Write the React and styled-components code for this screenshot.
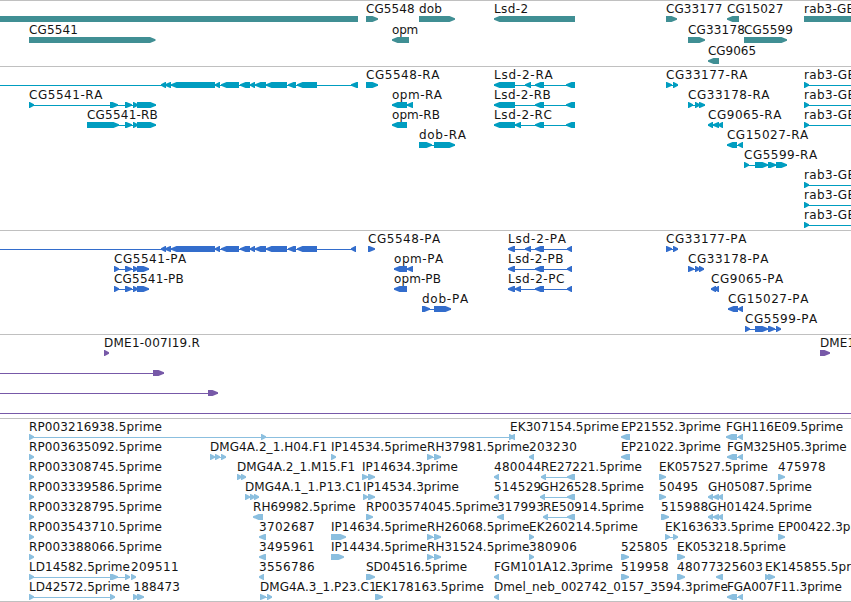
import React from "react";
import styled, { createGlobalStyle } from "styled-components";

const VIEW_WIDTH = 851;
const GLYPH_HEIGHT = 6;
const LABEL_FONT = '12px "DejaVu Sans"';

const GlobalStyle = createGlobalStyle`
  html, body { margin: 0; background: #fff; overflow: hidden; }
`;

const Browser = styled.main`
  display: flex;
  flex-direction: column;
  width: ${VIEW_WIDTH}px;
  height: 602px;
  overflow: hidden;
  background: #fff;
  color: #000;
`;

const TrackPanel = styled.section`
  box-sizing: border-box;
  flex: none;
  height: ${(p) => p.$height}px;
  padding-top: 1px;
  border-top: 1px solid #c0c0c0;
  color: ${(p) => p.$color};
`;

const Row = styled.div`
  display: flex;
  flex-direction: column;
  height: ${(p) => p.$pitch}px;
`;

const LabelLane = styled.div`
  position: relative;
  height: 14px;
`;

const Label = styled.span`
  position: absolute;
  top: 0;
  color: #141414;
  font: ${LABEL_FONT}, sans-serif;
  line-height: 14px;
  white-space: pre;
  font-kerning: none;
`;

const GlyphLane = styled.svg`
  display: block;
  flex: none;
  width: ${VIEW_WIDTH}px;
  height: ${GLYPH_HEIGHT}px;
  fill: currentColor;
`;

const BottomRule = styled.div`
  height: 1px;
  flex: none;
  background: #c0c0c0;
`;

/* strand: 1 forward, -1 reverse, 0 runs past the visible window */
const f = (label, x, end, strand, exons, line) => ({ label, x, end, strand, exons, line });

const geneBody = [
  [161, 166], [165, 171], [171, 215], [215, 220], [221, 239], [240, 250],
  [250, 255], [255, 266], [266, 287], [288, 296], [297, 317],
];
const rab3 = () => f("rab3-GEF-R", 804, 876, 1, [[804, 809]], [804, 851]);
const rp = (id) => f(`RP00${id}.5prime`, 29, 161.5, 1, [[29, 34]]);

const tracks = [
  {
    name: "genes", color: "#408f94", height: 66, pitch: 21,
    rows: [
      [
        f("", 0, 0, 0, [[0, 358]]),
        f("CG5548", 366, 414.3, 1, [[366, 378]]),
        f("dob", 419, 441.5, 1, [[419, 455]]),
        f("Lsd-2", 494, 528, -1, [[494, 575]]),
        f("CG33177", 666, 722, 1, [[666, 677]]),
        f("CG15027", 727, 783, -1, [[727, 739]]),
        f("rab3-GEF", 804, 861.5, 0, [[804, 851]]),
      ],
      [
        f("CG5541", 29, 77.6, 1, [[29, 155.5]]),
        f("opm", 392, 417.5, -1, [[392, 409]]),
        f("CG33178", 688, 744.5, 1, [[688, 705]]),
        f("CG5599", 744, 792.5, 1, [[744, 787]]),
      ],
      [f("CG9065", 708, 755.5, -1, [[708, 719]])],
    ],
  },
  {
    name: "transcripts", color: "#009dc0", height: 164, pitch: 20,
    rows: [
      [
        f("", 0, 0, -1, [...geneBody, [351, 358]], [0, 358]),
        f("CG5548-RA", 366, 439, 1, [[366, 371], [367, 378]]),
        f("Lsd-2-RA", 494, 552.5, -1, [[494, 515], [525, 531], [535, 544], [566, 575]]),
        f("CG33177-RA", 666, 747, 1, [[666, 672], [673, 678]]),
        rab3(),
      ],
      [
        f("CG5541-RA", 29, 102, 1, [[29, 34], [110, 118], [125, 132], [133, 138], [137, 156]]),
        f("opm-RA", 392, 441.5, -1, [[392, 407], [407, 413]]),
        f("Lsd-2-RB", 494, 550.7, -1, [[494, 515], [535, 544], [566, 575]]),
        f("CG33178-RA", 688, 769, 1, [[688, 693], [695, 700], [699, 705]]),
        rab3(),
      ],
      [
        f("CG5541-RB", 87, 157.5, 1, [[87, 119], [125, 132], [133, 138], [137, 156]]),
        f("opm-RB", 392, 439.5, -1, [[392, 407]]),
        f("Lsd-2-RC", 494, 551.5, -1, [[494, 515], [515, 521], [535, 544], [566, 575]]),
        f("CG9065-RA", 708, 781, -1, [[708, 713], [713, 719], [718, 723]]),
        rab3(),
      ],
      [
        f("dob-RA", 419, 465.7, 1, [[419, 432], [434, 455]]),
        f("CG15027-RA", 727, 807.7, -1, [[727, 737], [738, 743]]),
      ],
      [f("CG5599-RA", 744, 816.6, 1, [[744, 749], [755, 768], [768, 776], [776, 787]])],
      [rab3()],
      [rab3()],
      [rab3()],
    ],
  },
  {
    name: "proteins", color: "#336dcc", height: 104, pitch: 20,
    rows: [
      [
        f("", 0, 0, -1, [...geneBody, [351, 356]], [0, 356]),
        f("CG5548-PA", 368, 439.6, 1, [[368, 375]]),
        f("Lsd-2-PA", 508, 565.6, -1, [[508, 515], [525, 531], [535, 544], [567, 572]]),
        f("CG33177-PA", 666, 745.6, 1, [[666, 672], [673, 678]]),
      ],
      [
        f("CG5541-PA", 114, 185.6, 1, [[114, 119], [125, 132], [133, 138], [137, 149]]),
        f("opm-PA", 394, 442.6, -1, [[394, 407], [407, 413]]),
        f("Lsd-2-PB", 508, 563.5, -1, [[508, 515], [535, 544], [567, 572]]),
        f("CG33178-PA", 688, 767.6, 1, [[688, 694], [695, 700], [699, 704]]),
      ],
      [
        f("CG5541-PB", 114, 183.5, 1, [[114, 119], [125, 132], [133, 138], [137, 149]]),
        f("opm-PB", 394, 440.5, -1, [[394, 407]]),
        f("Lsd-2-PC", 508, 564.5, -1, [[508, 515], [515, 521], [535, 544], [567, 572]]),
        f("CG9065-PA", 711, 782.6, -1, [[711, 716], [714, 719]]),
      ],
      [
        f("dob-PA", 422, 467.6, 1, [[422, 430], [434, 451]]),
        f("CG15027-PA", 728, 807.6, -1, [[728, 738], [738, 743]]),
      ],
      [f("CG5599-PA", 745, 816.6, 1, [[745, 750], [755, 768], [768, 775], [776, 781]])],
    ],
  },
  {
    name: "clones", color: "#7759a8", height: 84, pitch: 20,
    rows: [
      [
        f("DME1-007I19.R", 104, 199.6, 1, [[104, 109]]),
        f("DME1-0", 820, 867, 1, [[820, 830]]),
      ],
      [f("", 0, 0, 1, [[153, 164]], [0, 164])],
      [f("", 0, 0, 1, [[208, 218]], [0, 218])],
      [f("", 0, 0, 1, [], [0, 851])],
    ],
  },
  {
    name: "ests", color: "#8bbfdf", height: 183, pitch: 20,
    rows: [
      [
        f("RP003216938.5prime", 29, 161.5, 1, [[29, 34], [261, 266], [509, 514]]),
        f("EK307154.5prime", 510, 618.5, -1, [[510, 515]]),
        f("EP21552.3prime", 621, 720.5, -1, [[621, 630]]),
        f("FGH116E09.5prime", 726, 842.5, -1, [[726, 737], [738, 743]]),
      ],
      [
        rp("3635092"),
        f("DMG4A.2_1.H04.F1", 210, 326.5, 1, [[210, 215], [215, 220], [221, 226]]),
        f("IP14534.5prime", 331, 426.5, 1, [[331, 336]]),
        f("RH37981.5prime", 427, 529, 1, [[427, 433], [434, 441]]),
        f("203230", 529, 576.7, -1, [[529, 534]]),
        f("EP21022.3prime", 621, 720.5, -1, [[621, 630]]),
        f("FGM325H05.3prime", 727, 846.2, -1, [[727, 737], [738, 743]]),
      ],
      [
        rp("3308745"),
        f("DMG4A.2_1.M15.F1", 237, 354.5, 1, [[237, 242], [241, 246]]),
        f("IP14634.3prime", 362, 457.5, 1, [[362, 368], [368, 375]]),
        f("480044", 494, 541, -1, [[494, 499]]),
        f("RE27221.5prime", 541, 641.5, -1, [[541, 546], [567, 575]]),
        f("EK057527.5prime", 659, 767.5, 1, [[659, 666]]),
        f("475978", 778, 825.5, 1, [[778, 785]]),
      ],
      [
        rp("3339586"),
        f("DMG4A.1_1.P13.C1", 245, 361, 1, [[245, 250], [250, 255], [254, 259]]),
        f("IP14534.3prime", 363, 458.5, 1, [[363, 368], [368, 375]]),
        f("514529", 494, 541, -1, [[494, 499]]),
        f("GH26528.5prime", 540, 643.5, -1, [[540, 545], [567, 575]]),
        f("50495", 659, 698, 1, [[659, 666]]),
        f("GH05087.5prime", 708, 811.5, -1, [[708, 713], [713, 719], [718, 723]]),
      ],
      [
        rp("3328795"),
        f("RH69982.5prime", 253, 355.3, -1, [[253, 263]]),
        f("RP003574045.5prime", 366, 498, 1, [[366, 373]]),
        f("317993", 497, 543.5, -1, [[497, 504]]),
        f("RE50914.5prime", 543, 643.5, -1, [[543, 548], [567, 575]]),
        f("515988", 661, 708, 1, [[661, 669]]),
        f("GH01424.5prime", 708, 811.5, -1, [[708, 713], [713, 719], [718, 723]]),
      ],
      [
        rp("3543710"),
        f("3702687", 259, 314.5, -1, [[259, 266]]),
        f("IP14634.5prime", 331, 426.5, 1, [[331, 346]]),
        f("RH26068.5prime", 427, 529, 1, [[427, 433], [434, 441]]),
        f("EK260214.5prime", 529, 637.5, 1, [[529, 534]]),
        f("EK163633.5prime", 665, 773.5, 1, [[665, 670], [673, 678]]),
        f("EP00422.3prime", 778, 877.5, 1, [[778, 785]]),
      ],
      [
        rp("3388066"),
        f("3495961", 259, 314.5, -1, [[259, 266]]),
        f("IP14434.5prime", 331, 426.5, 1, [[331, 344]]),
        f("RH31524.5prime", 427, 529, 1, [[427, 433], [434, 441]]),
        f("380906", 529, 576.7, 1, [[529, 534]]),
        f("525805", 621, 667.5, 1, [[621, 629]]),
        f("EK053218.5prime", 677, 785.5, 1, [[677, 685]]),
      ],
      [
        f("LD14582.5prime", 29, 129.5, 1, [[29, 34], [110, 118], [125, 130]]),
        f("209511", 131, 178.5, 1, [[131, 136]]),
        f("3556786", 259, 314.5, -1, [[259, 264]]),
        f("SD04516.5prime", 366, 466.5, 1, [[366, 375]]),
        f("FGM101A12.3prime", 494, 612.3, -1, [[494, 499]]),
        f("519958", 621, 668.5, 1, [[621, 629]]),
        f("48077", 677, 716, 1, [[677, 685]]),
        f("325603", 716, 762.5, -1, [[716, 723]]),
        f("EK145855.5prime", 765, 873.5, 1, [[765, 770], [768, 775]]),
      ],
      [
        f("LD42572.5prime", 29, 129.5, 1, [[29, 34], [110, 115]]),
        f("188473", 133.5, 179.6, 1, [[133, 138], [137, 144]]),
        f("DMG4A.3_1.P23.C1", 260, 376, 1, [[260, 266], [267, 272]]),
        f("EK178163.5prime", 375, 483.5, 1, [[375, 383]]),
        f("Dmel_neb_002742_0157_3594.3prime", 494, 727.5, -1, [[494, 499]]),
        f("FGA007F11.3prime", 727, 841.3, -1, [[727, 737], [738, 743]]),
      ],
    ],
  },
];

const pen = document.createElement("canvas").getContext("2d");

/* Tracking that makes a label span the given number of pixels. */
function trackingFor(text, width) {
  pen.font = LABEL_FONT;
  return (width - pen.measureText(text).width) / text.length;
}

function exonPath([a, b], strand) {
  if (strand === 0) return `M${a} 0H${b}V6H${a}Z`;
  const tip = Math.min(5.5, b - a - 0.8);
  return strand > 0
    ? `M${a} 0H${b - tip}L${b} 2.3V3.7L${b - tip} 6H${a}Z`
    : `M${b} 0H${a + tip}L${a} 2.3V3.7L${a + tip} 6H${b}Z`;
}

function Feature({ strand, exons, line }) {
  const [from, to] = line || [exons[0][0], exons[exons.length - 1][1]];
  const connected = line || exons.length > 1;
  return (
    <g>
      {connected && <rect x={from} y={3} width={to - from} height={1} />}
      {exons.map((e, i) => (
        <path key={i} d={exonPath(e, strand)} />
      ))}
    </g>
  );
}

function FeatureLabel({ label, x, end }) {
  const letterSpacing = trackingFor(label, end - x + 0.5);
  return <Label style={{ left: x, letterSpacing }}>{label}</Label>;
}

export default function App() {
  return (
    <Browser>
      <GlobalStyle />
      {tracks.map((t) => (
        <TrackPanel key={t.name} $height={t.height} $color={t.color}>
          {t.rows.map((features, r) => (
            <Row key={r} $pitch={t.pitch}>
              <LabelLane>
                {features.filter((x) => x.label).map((x, i) => (
                  <FeatureLabel key={i} {...x} />
                ))}
              </LabelLane>
              <GlyphLane viewBox={`0 0 ${VIEW_WIDTH} ${GLYPH_HEIGHT}`}>
                {features.map((x, i) => (
                  <Feature key={i} {...x} />
                ))}
              </GlyphLane>
            </Row>
          ))}
        </TrackPanel>
      ))}
      <BottomRule />
    </Browser>
  );
}
